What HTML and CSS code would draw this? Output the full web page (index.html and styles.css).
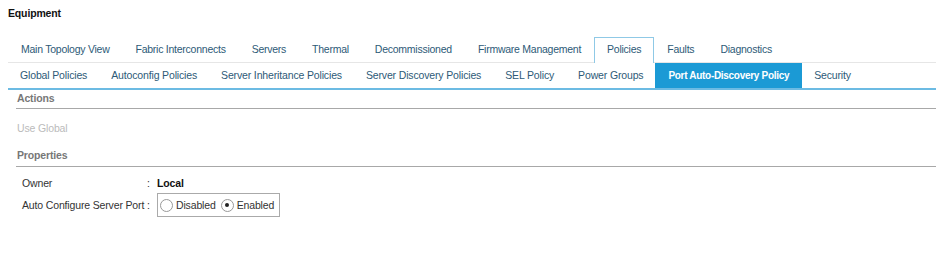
FILE: index.html
```html
<!DOCTYPE html>
<html lang="en">
<head>
  <meta charset="UTF-8" />
  <title>Equipment</title>
  <link rel="stylesheet" href="styles.css">
</head>
<body>
  <div class="page">
    <h1>Equipment</h1>

    <div class="tabs">
      <div class="tab">Main Topology View</div>
      <div class="tab">Fabric Interconnects</div>
      <div class="tab">Servers</div>
      <div class="tab">Thermal</div>
      <div class="tab">Decommissioned</div>
      <div class="tab">Firmware Management</div>
      <div class="tab active">Policies</div>
      <div class="tab">Faults</div>
      <div class="tab">Diagnostics</div>
    </div>

    <div class="subtabs">
      <div class="subtab">Global Policies</div>
      <div class="subtab">Autoconfig Policies</div>
      <div class="subtab">Server Inheritance Policies</div>
      <div class="subtab">Server Discovery Policies</div>
      <div class="subtab">SEL Policy</div>
      <div class="subtab">Power Groups</div>
      <div class="subtab active">Port Auto-Discovery Policy</div>
      <div class="subtab">Security</div>
    </div>

    <div class="content">
      <div class="section-title">Actions</div>
      <div class="action disabled">Use Global</div>

      <div class="section-title props">Properties</div>
      <div class="prop-row">
        <span class="prop-label">Owner</span>
        <span class="colon">:</span>
        <span class="prop-value">Local</span>
      </div>
      <div class="prop-row">
        <span class="prop-label">Auto Configure Server Port</span>
        <span class="colon">:</span>
        <div class="radio-group">
          <label class="radio"><span class="circle"></span>Disabled</label>
          <label class="radio"><span class="circle checked"></span>Enabled</label>
        </div>
      </div>
    </div>
  </div>
</body>
</html>
```

FILE: styles.css
```css
body {
  font-family: 'Liberation Sans', Arial, sans-serif;
  font-size: 10.5px;
  letter-spacing: -0.15px;
  color: #333;
  background-color: #fff;
  margin: 0;
  padding: 0;
}
.page {
  padding: 6px 0 0 8px;
}
h1 {
  font-size: 10.5px;
  line-height: 14px;
  font-weight: bold;
  color: #111;
  margin: 0 0 17px 0;
}
.tabs {
  display: flex;
  border-bottom: 1px solid #e6e6e6;
}
.tab {
  padding: 0 12px 2px 12px;
  line-height: 22px;
  border: 1px solid transparent;
  border-bottom: none;
  color: #2d5a77;
  margin-bottom: -1px;
  white-space: nowrap;
  letter-spacing: -0.25px;
}
.tab.active {
  border-color: #8fc9e6;
  background-color: #fff;
  padding-bottom: 3px;
}
.subtabs {
  display: flex;
  border-bottom: 2px solid #6cbbe3;
}
.subtab {
  padding: 0 12px;
  line-height: 25px;
  color: #2d5a77;
  white-space: nowrap;
}
.subtab.active {
  background-color: #1b9ad5;
  color: #fff;
  font-weight: bold;
  font-size: 10px;
  letter-spacing: -0.3px;
  padding: 0 13px;
}
.content {
  margin-left: 8px;
}
.section-title {
  font-weight: bold;
  color: #777;
  line-height: 14px;
  margin-top: 1px;
  padding: 0 0 3px 1px;
  border-bottom: 1px solid #a8a8a8;
}
.section-title.props {
  margin-top: 13px;
  padding-bottom: 4px;
}
.action {
  line-height: 14px;
  margin-top: 12px;
  padding-left: 1px;
}
.action.disabled {
  color: #bbb;
}
.prop-row {
  display: flex;
  align-items: center;
  padding-left: 6px;
  margin-top: 9px;
  line-height: 14px;
  white-space: nowrap;
}
.prop-row + .prop-row {
  margin-top: 3px;
}
.prop-label {
  width: 125px;
}
.colon {
  width: 10px;
}
.prop-value {
  font-weight: bold;
  color: #111;
}
.radio-group {
  display: flex;
  align-items: center;
  border: 1px solid #aaa;
  height: 22px;
  padding: 0 5px 0 2px;
}
.radio {
  display: flex;
  align-items: center;
  margin-right: 5px;
}
.radio:last-child {
  margin-right: 0;
}
.circle {
  width: 11px;
  height: 11px;
  border: 1px solid #999;
  border-radius: 50%;
  margin-right: 3px;
  display: flex;
  align-items: center;
  justify-content: center;
  background: #fff;
}
.circle.checked::after {
  content: "";
  width: 4px;
  height: 4px;
  border-radius: 50%;
  background: #222;
}
```
